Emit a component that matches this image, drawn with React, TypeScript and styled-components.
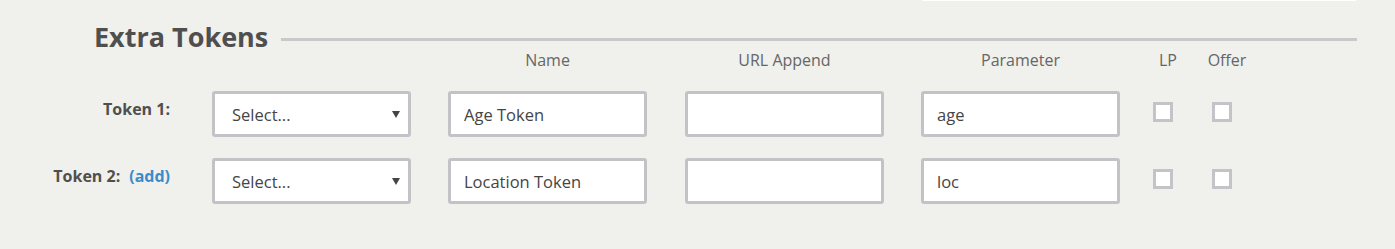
import React from 'react'
import styled, { createGlobalStyle } from 'styled-components'

const GlobalStyle = createGlobalStyle`
  body {
    margin: 0;
    background: #f0f0ec;
    font-family: 'Open Sans', 'Liberation Sans', sans-serif;
  }
`

const Page = styled.div`
  width: 1395px;
  height: 249px;
  overflow: hidden;
`

const TopStrip = styled.div`
  width: 434px;
  height: 1px;
  margin-left: 922px;
  background: #ffffff;
`

const TitleRow = styled.div`
  display: flex;
  align-items: flex-start;
  width: 1357px;
  margin-top: 23px;
  padding-left: 94px;
  box-sizing: border-box;
`

const Title = styled.h2`
  margin: 0;
  font-size: 27px;
  line-height: 26px;
  font-weight: 700;
  color: #4f4f4f;
`

const Rule = styled.div`
  flex: 1;
  height: 3px;
  margin: 14px 0 0 13px;
  background: #c9c9c9;
`

const Grid = styled.div`
  display: grid;
  grid-template-columns: 212px 236px 237px 236px 224px 59px 59px;
  row-gap: 21px;
`

const ColHead = styled.div<{ $width: number }>`
  width: ${p => p.$width}px;
  text-align: center;
  font-size: 16px;
  line-height: 20px;
  color: #666666;
`

const Label = styled.div`
  align-self: start;
  padding: 7px 42px 0 0;
  text-align: right;
  font-size: 16px;
  line-height: 22px;
  font-weight: 700;
  color: #4f4f4f;
`

const AddLink = styled.a`
  margin-left: 9px;
  color: #3c8bc9;
  text-decoration: none;
  cursor: pointer;
`

const fieldBox = `
  width: 199px;
  height: 46px;
  box-sizing: border-box;
  border: 3px solid #c3c3c7;
  border-radius: 3px;
  background: #ffffff;
  font-family: 'Open Sans', 'Liberation Sans', sans-serif;
  font-size: 16.5px;
  font-weight: 500;
  color: #454545;
  outline: none;
`

const TextField = styled.input`
  ${fieldBox}
  padding: 0 13px;
`

const SelectWrap = styled.div`
  position: relative;
  width: 199px;
`

const Select = styled.select`
  ${fieldBox}
  appearance: none;
  padding: 0 30px 0 17px;
`

const Caret = styled.svg`
  position: absolute;
  right: 11px;
  top: 20px;
  pointer-events: none;
`

const Check = styled.input`
  appearance: none;
  align-self: start;
  justify-self: start;
  width: 20px;
  height: 20px;
  margin: 11px 0 0 8px;
  box-sizing: border-box;
  border: 3px solid #c4c4c8;
  background: #ffffff;
`

interface TokenRowProps {
  index: number
  name: string
  param: string
  canAdd?: boolean
}

const TokenRow: React.FC<TokenRowProps> = ({ index, name, param, canAdd }) => (
  <>
    <Label>
      Token {index}:{canAdd && <AddLink>(add)</AddLink>}
    </Label>
    <SelectWrap>
      <Select defaultValue="">
        <option value="">Select...</option>
      </Select>
      <Caret width="8" height="7" viewBox="0 0 8 7">
        <path d="M0 0h8L4 7z" fill="#444" />
      </Caret>
    </SelectWrap>
    <TextField defaultValue={name} />
    <TextField defaultValue="" />
    <TextField defaultValue={param} />
    <Check type="checkbox" />
    <Check type="checkbox" />
  </>
)

const App: React.FC = () => (
  <Page>
    <GlobalStyle />
    <TopStrip />
    <TitleRow>
      <Title>Extra Tokens</Title>
      <Rule />
    </TitleRow>
    <Grid>
      <div />
      <div />
      <ColHead $width={199}>Name</ColHead>
      <ColHead $width={199}>URL Append</ColHead>
      <ColHead $width={199}>Parameter</ColHead>
      <ColHead $width={46}>LP</ColHead>
      <ColHead $width={46}>Offer</ColHead>
      <TokenRow index={1} name="Age Token" param="age" />
      <TokenRow index={2} name="Location Token" param="loc" canAdd />
    </Grid>
  </Page>
)

export default App
